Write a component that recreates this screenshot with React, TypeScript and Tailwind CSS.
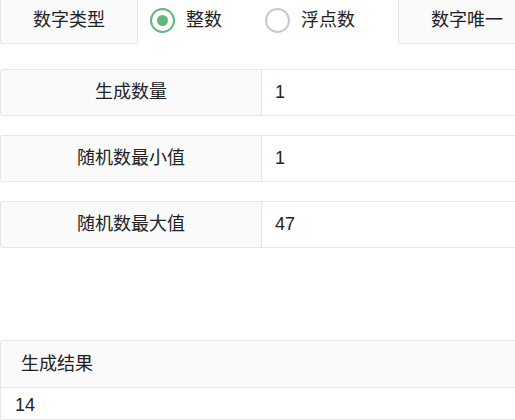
import React from "react";

const font = { fontFamily: '"Liberation Sans", "Noto Sans CJK SC", sans-serif' };

function Radio({ label, checked }: { label: string; checked?: boolean }) {
  return (
    <div className="flex items-center">
      <span
        className={`flex h-[25px] w-[25px] items-center justify-center rounded-full border-2 ${
          checked ? "border-[#5fb878]" : "border-[#c9c9c9]"
        }`}
      >
        {checked && <span className="h-[11px] w-[11px] rounded-full bg-[#5fb878]" />}
      </span>
      <span className="ml-[11px] text-[18px] text-[#222]">{label}</span>
    </div>
  );
}

function FieldRow({ label, value }: { label: string; value: string }) {
  return (
    <div className="flex h-[47px] border border-[#e6e6e6] rounded-[2px]">
      <div className="flex w-[261px] shrink-0 items-center justify-center border-r border-[#e6e6e6] bg-[#fafafa] text-[18px] text-[#222]">
        {label}
      </div>
      <div className="flex flex-1 items-center bg-white pl-[13px] text-[18px] text-[#222]">{value}</div>
    </div>
  );
}

export default function App() {
  const rows = [
    { label: "生成数量", value: "1" },
    { label: "随机数最小值", value: "1" },
    { label: "随机数最大值", value: "47" },
  ];

  return (
    <div className="h-[420px] w-[515px] overflow-hidden bg-white" style={font}>
      <div className="w-[560px]">
        {/* number type selector */}
        <div className="flex h-[44px] items-center">
          <div className="flex h-[44px] w-[138px] items-center justify-center rounded-b-[2px] border border-t-0 border-[#e6e6e6] bg-[#fafafa] pb-[3px] text-[18px] text-[#222]">
            数字类型
          </div>
          <div className="ml-[12px] w-[115px] pb-[3px]">
            <Radio label="整数" checked />
          </div>
          <div className="w-[133px] pb-[3px]">
            <Radio label="浮点数" />
          </div>
          <div className="flex h-[44px] flex-1 items-center rounded-b-[2px] border border-t-0 border-[#e6e6e6] bg-[#fafafa] pb-[3px] pl-[32px] text-[18px] text-[#222]">
            数字唯一
          </div>
        </div>

        <div className="mt-[25px] flex flex-col gap-[19px]">
          {rows.map((r) => (
            <FieldRow key={r.label} label={r.label} value={r.value} />
          ))}
        </div>

        {/* result panel */}
        <div className="mt-[92px] border border-[#e6e6e6] rounded-[2px]">
          <div className="flex h-[47px] items-center border-b border-[#e6e6e6] bg-[#fafafa] pl-[20px] text-[18px] text-[#222]">
            生成结果
          </div>
          <div className="px-[14px] pt-[4px] text-[18px] text-[#222]">14</div>
        </div>
      </div>
    </div>
  );
}
